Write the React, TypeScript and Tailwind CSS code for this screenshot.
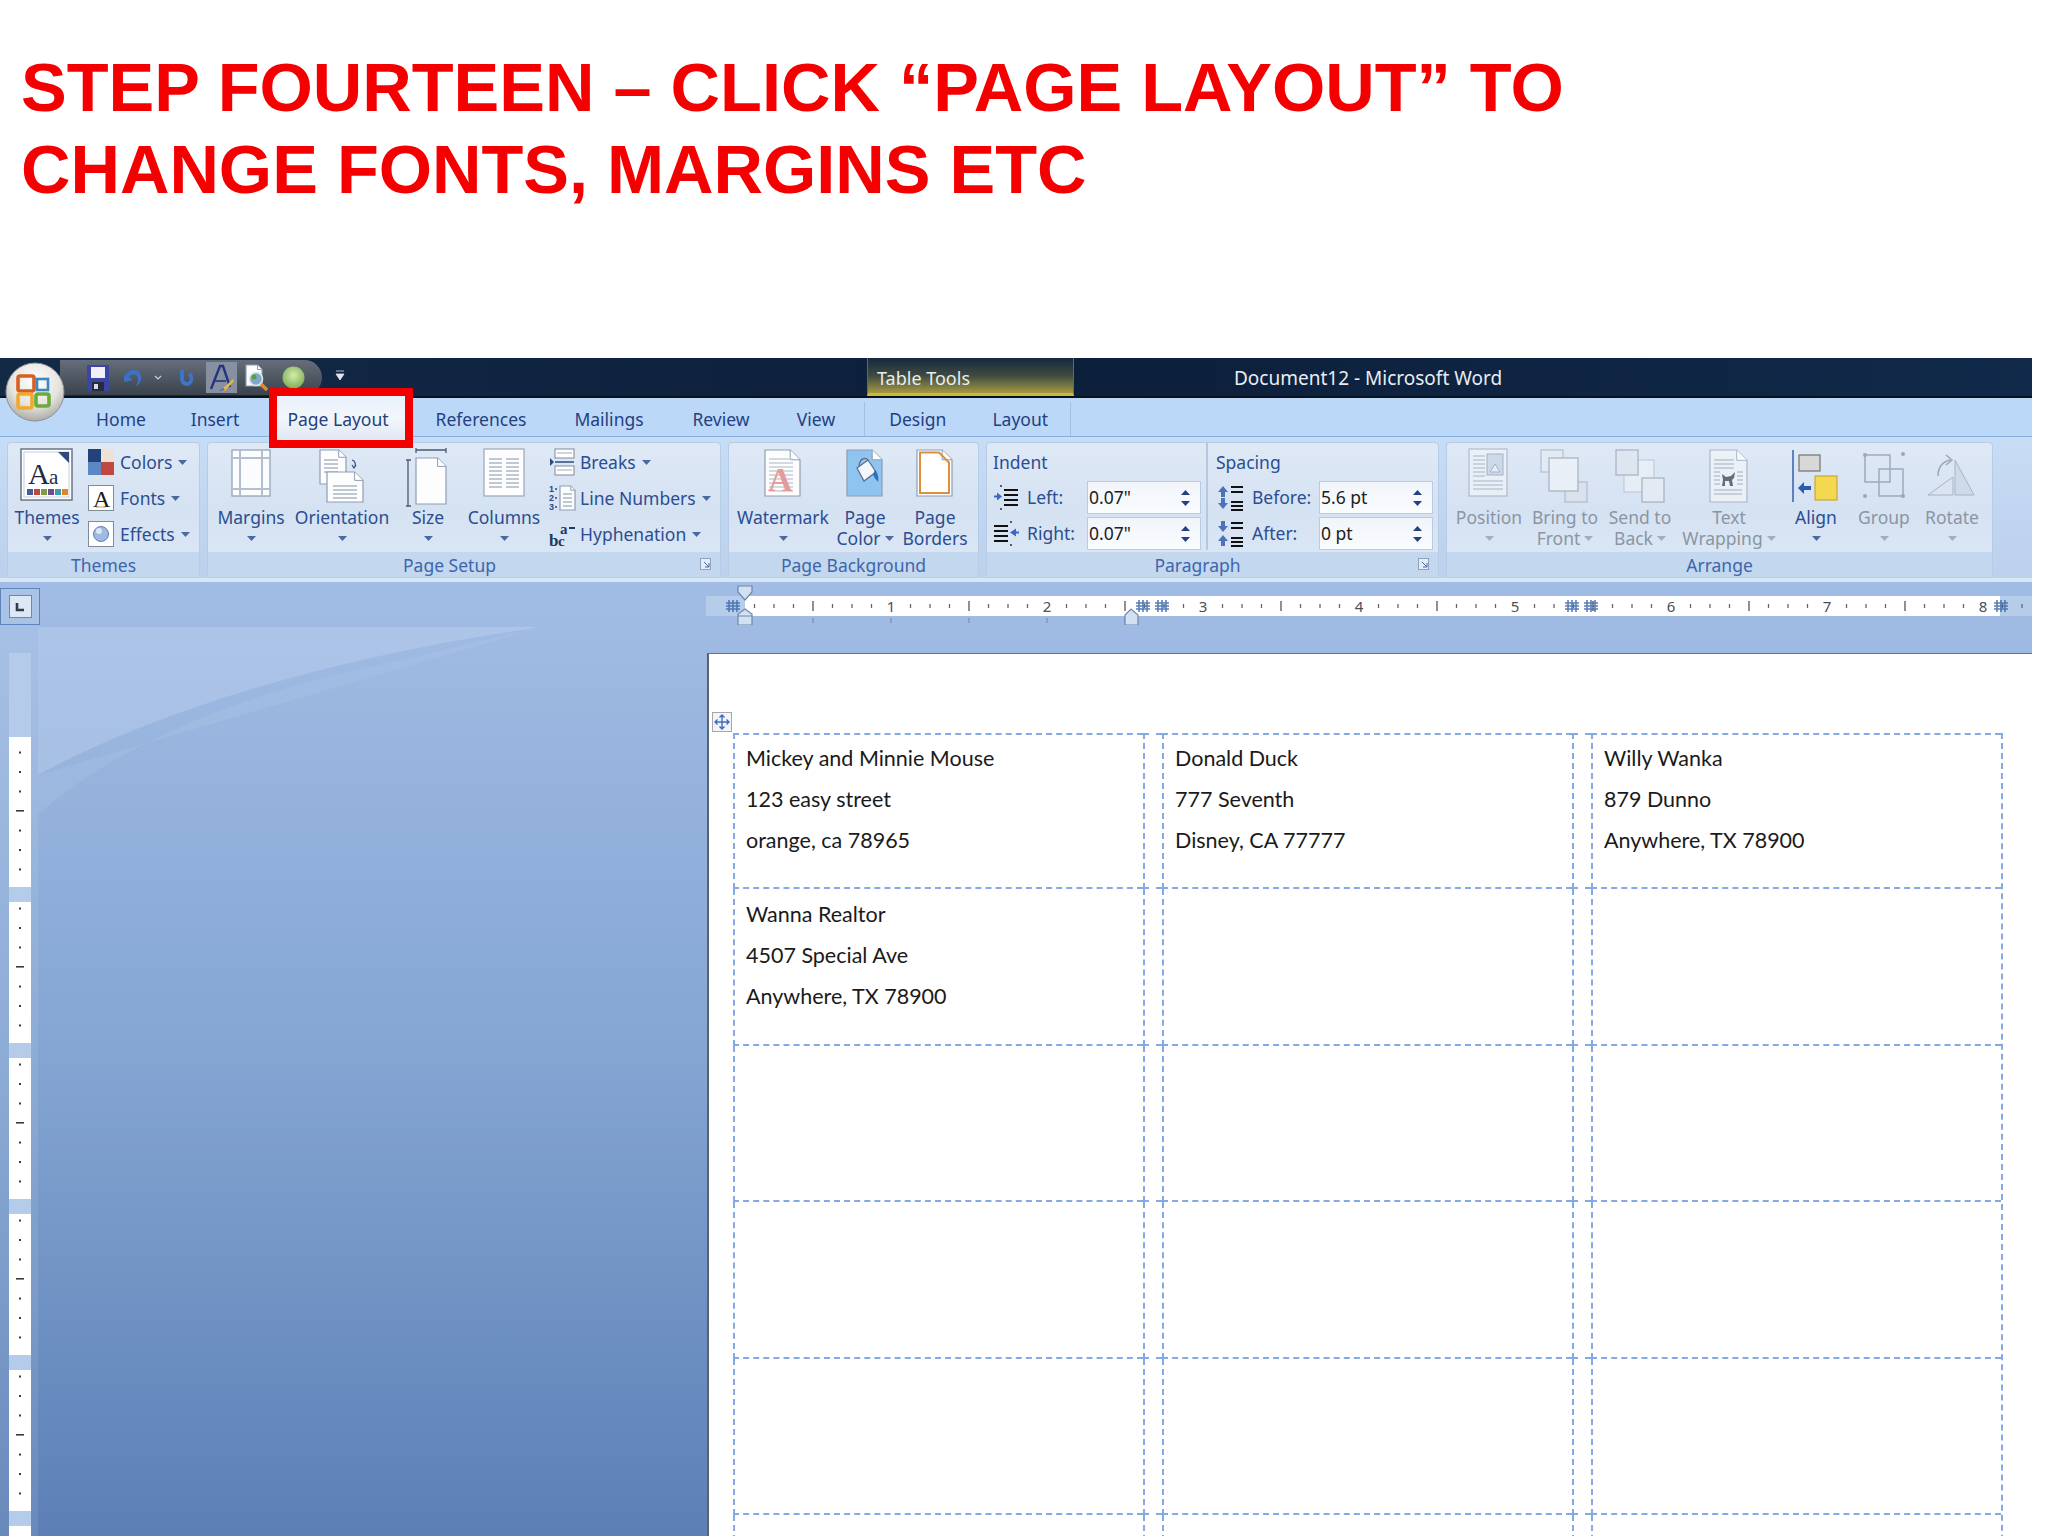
import React from "react";

const ui = { fontFamily: '"Noto Sans", sans-serif' };

// small dropdown triangle used all over the ribbon
function Caret({ color = "#4a69a3" }: { color?: string }) {
  return (
    <svg width="9" height="5" className="inline-block align-middle shrink-0">
      <path d="M0 0h9L4.5 5z" fill={color} />
    </svg>
  );
}

function Doc({ x, y, w, h, fill = "#fdfdfe", stroke = "#8d9db3" }: { x: number; y: number; w: number; h: number; fill?: string; stroke?: string }) {
  const f = Math.min(w, h) * 0.28;
  return (
    <g>
      <path d={`M${x} ${y}h${w - f}l${f} ${f}v${h - f}h${-w}z`} fill={fill} stroke={stroke} strokeWidth="1.2" />
      <path d={`M${x + w - f} ${y}v${f}h${f}`} fill="#fff" stroke={stroke} strokeWidth="1" />
    </g>
  );
}

function Lines({ x, y, w, n, gap = 4, color = "#aab4c4" }: { x: number; y: number; w: number; n: number; gap?: number; color?: string }) {
  return (
    <g stroke={color} strokeWidth="1.4">
      {Array.from({ length: n }).map((_, i) => (
        <path key={i} d={`M${x} ${y + i * gap}h${w}`} />
      ))}
    </g>
  );
}

function ThemesIcon() {
  return (
    <svg width="54" height="54">
      <rect x="1" y="1" width="51" height="51" fill="#fff" stroke="#6a7687" strokeWidth="1.5" />
      <rect x="4" y="4" width="45" height="45" fill="none" stroke="#c3cedd" />
      <path d="M38 4h11v11z" fill="#2c4a80" />
      <text x="8" y="36" fontSize="30" fontFamily="Liberation Serif" fill="#1c2c4a">A</text>
      <text x="29" y="36" fontSize="21" fontFamily="Liberation Serif" fill="#1c2c4a">a</text>
      {["#3c5f9c", "#c2453e", "#7f9b45", "#6b4e8e", "#3d9ab0", "#e0852f"].map((c, i) => (
        <rect key={c} x={7 + i * 7} y="41" width="6" height="6" fill={c} />
      ))}
    </svg>
  );
}

function ColorsIcon() {
  return (
    <svg width="26" height="26">
      <rect width="13" height="13" fill="#23427c" />
      <rect x="13" width="13" height="13" fill="#eee2d4" />
      <rect y="13" width="13" height="13" fill="#5b88c4" />
      <rect x="13" y="13" width="13" height="13" fill="#c2473f" />
    </svg>
  );
}

function FontsIcon() {
  return (
    <svg width="26" height="26">
      <rect x="0.5" y="0.5" width="25" height="25" fill="#fff" stroke="#7f8a9b" />
      <text x="5" y="22" fontSize="24" fontFamily="Liberation Serif" fill="#1a1a1a">A</text>
      <path d="M8 22h10" stroke="#d9a441" strokeWidth="1" />
    </svg>
  );
}

function EffectsIcon() {
  return (
    <svg width="26" height="26">
      <rect x="0.5" y="0.5" width="25" height="25" fill="#fff" stroke="#7f8a9b" />
      <circle cx="13" cy="13" r="7.5" fill="#9fbbe0" stroke="#5c7fb2" />
      <circle cx="11" cy="10" r="3" fill="#dbe7f6" />
    </svg>
  );
}

function MarginsIcon() {
  return (
    <svg width="42" height="50">
      <rect x="2" y="2" width="38" height="46" fill="#fbfcfe" stroke="#8d9db3" strokeWidth="1.2" />
      <path d="M10 2v46M32 2v46M2 10h38M2 41h38" stroke="#b4bfce" strokeWidth="2" />
    </svg>
  );
}

function OrientationIcon() {
  return (
    <svg width="48" height="56">
      <Doc x={2} y={2} w={26} h={34} />
      <Lines x={6} y={12} w={14} n={4} />
      <path d="M34 12c3 1 4 3 3 7M38 17l-2 3-2-3" fill="none" stroke="#2c4a80" strokeWidth="1.2" />
      <Doc x={9} y={24} w={36} h={30} />
      <Lines x={15} y={38} w={24} n={4} />
    </svg>
  );
}

function SizeIcon() {
  return (
    <svg width="44" height="60">
      <path d="M10 2h30M10 0v5M40 0v5M2 12v46M0 12h5M0 58h5" stroke="#4a5a73" strokeWidth="1.3" />
      <Doc x={10} y={10} w={30} h={46} />
    </svg>
  );
}

function ColumnsIcon() {
  return (
    <svg width="42" height="50">
      <rect x="1" y="1" width="40" height="47" fill="#fdfdfe" stroke="#9aa7b9" strokeWidth="1.2" />
      <Lines x={6} y={11} w={13} n={8} />
      <Lines x={23} y={11} w={13} n={8} />
    </svg>
  );
}

function WatermarkIcon() {
  return (
    <svg width="40" height="50">
      <Doc x={2} y={2} w={35} h={46} />
      <Lines x={6} y={11} w={24} n={9} color="#c6ced9" />
      <text x="5" y="43" fontSize="34" fontFamily="Liberation Serif" fontWeight="700" fill="#e59b9b">A</text>
    </svg>
  );
}

function PageColorIcon() {
  return (
    <svg width="40" height="50">
      <Doc x={2} y={2} w={35} h={46} fill="#8fc3f0" />
      <path d="M12 20l11-8 8 12-12 9z" fill="#f4f7fb" stroke="#5a6c86" strokeWidth="1.2" />
      <path d="M14 18c1-8 6-9 9-6" fill="none" stroke="#5a6c86" strokeWidth="1.2" />
      <path d="M30 22c3 3 4 8 3 12-2-3-4-4-5-8z" fill="#2b72c0" />
    </svg>
  );
}

function PageBordersIcon() {
  return (
    <svg width="40" height="50">
      <Doc x={2} y={2} w={35} h={46} fill="#fff" stroke="#8d9db3" />
      <path d="M5 4.5h19l10 10V45H5z" fill="none" stroke="#de8f3c" strokeWidth="2" />
    </svg>
  );
}

function PositionIcon() {
  return (
    <svg width="42" height="50" opacity="0.65">
      <rect x="1" y="1" width="38" height="47" fill="#f2f5f9" stroke="#9aa7b9" strokeWidth="1.2" />
      <Lines x={5} y={8} w={12} n={6} gap={4} />
      <Lines x={5} y={33} w={30} n={3} gap={4} />
      <rect x="19" y="6" width="16" height="21" fill="#c6d3e4" stroke="#8796ab" />
      <path d="M22 24l5-8 5 8z" fill="#eef2f7" stroke="#8796ab" />
    </svg>
  );
}

function BringFrontIcon() {
  return (
    <svg width="52" height="56" opacity="0.65">
      <rect x="26" y="34" width="22" height="20" fill="#dbe2ea" stroke="#8f9cae" />
      <rect x="2" y="2" width="22" height="22" fill="#e6ecf4" stroke="#8f9cae" />
      <rect x="10" y="10" width="29" height="33" fill="#f2f5f9" stroke="#8f9cae" strokeWidth="1.3" />
    </svg>
  );
}

function SendBackIcon() {
  return (
    <svg width="52" height="56" opacity="0.65">
      <rect x="10" y="12" width="30" height="32" fill="#eef2f7" stroke="#a9b4c4" />
      <rect x="2" y="2" width="22" height="25" fill="#dfe5ed" stroke="#8f9cae" strokeWidth="1.3" />
      <rect x="28" y="30" width="22" height="24" fill="#eaeef4" stroke="#8f9cae" strokeWidth="1.3" />
    </svg>
  );
}

function WrapIcon() {
  return (
    <svg width="42" height="56" opacity="0.75">
      <Doc x={2} y={2} w={37} h={52} fill="#f2f5f9" stroke="#9aa7b9" />
      <Lines x={6} y={12} w={20} n={3} />
      <Lines x={6} y={42} w={28} n={2} />
      <Lines x={6} y={24} w={6} n={4} />
      <Lines x={29} y={24} w={6} n={4} />
      <path d="M14 26l4 3 5-1 4-4-1 6-2 2 1 6-3 0-1-5-4 0 0 5-3 0 1-6z" fill="#3c4554" />
    </svg>
  );
}

function AlignIcon() {
  return (
    <svg width="48" height="56">
      <path d="M1 2v52" stroke="#3f66b3" strokeWidth="1.6" />
      <rect x="7" y="7" width="21" height="16" fill="#d8d8d8" stroke="#7a7a7a" strokeWidth="1.3" />
      <rect x="23" y="28" width="22" height="24" fill="#f4d84f" stroke="#c7a93a" strokeWidth="1.2" />
      <path d="M6 40l6-6v4h7v4h-7v4z" fill="#2a5bb0" />
    </svg>
  );
}

function GroupIcon() {
  return (
    <svg width="44" height="56" opacity="0.6">
      <rect x="3" y="7" width="25" height="27" fill="none" stroke="#6f7d91" strokeWidth="1.4" />
      <rect x="17" y="21" width="24" height="27" fill="none" stroke="#6f7d91" strokeWidth="1.4" />
      <circle cx="3" cy="7" r="2" fill="#6f7d91" />
      <circle cx="41" cy="6" r="2" fill="#6f7d91" />
      <circle cx="3" cy="48" r="2" fill="#6f7d91" />
      <circle cx="41" cy="48" r="2" fill="#6f7d91" />
    </svg>
  );
}

function RotateIcon() {
  return (
    <svg width="52" height="56" opacity="0.6">
      <path d="M2 47l25-18v18z" fill="#dde4ed" stroke="#8796ab" />
      <path d="M29 12l19 35H29z" fill="#c9d4e2" stroke="#8796ab" />
      <path d="M12 28c0-9 4-14 12-16M20 7l6 5-6 5" fill="none" stroke="#6f7d91" strokeWidth="1.4" />
    </svg>
  );
}

function BreaksIcon() {
  return (
    <svg width="26" height="28">
      <rect x="6" y="1" width="19" height="9" fill="#fff" stroke="#7e8a9c" />
      <rect x="6" y="18" width="19" height="9" fill="#fff" stroke="#7e8a9c" />
      <path d="M8 5h15M8 22h15" stroke="#a3adbb" />
      <path d="M6 14h19" stroke="#2c4a80" strokeWidth="1.4" />
      <path d="M1 10l4 4-4 4z" fill="#2c4a80" />
    </svg>
  );
}

function LineNumbersIcon() {
  return (
    <svg width="28" height="28">
      <text x="0" y="8" fontSize="9" fontWeight="700" fontFamily="Liberation Sans" fill="#2c4a80">1</text>
      <text x="0" y="17" fontSize="9" fontWeight="700" fontFamily="Liberation Sans" fill="#2c4a80">2</text>
      <text x="0" y="26" fontSize="9" fontWeight="700" fontFamily="Liberation Sans" fill="#2c4a80">3</text>
      <path d="M6 5h2M6 14h2M6 23h2" stroke="#2c4a80" strokeWidth="1.6" />
      <Doc x={11} y={2} w={15} h={24} />
      <Lines x={14} y={10} w={9} n={4} />
    </svg>
  );
}

function HyphenIcon() {
  return (
    <svg width="28" height="28">
      <text x="0" y="26" fontSize="17" fontWeight="700" fontFamily="Liberation Serif" fill="#233a60">b</text>
      <text x="9" y="26" fontSize="15" fontWeight="700" fontFamily="Liberation Serif" fill="#233a60">c</text>
      <text x="11" y="14" fontSize="15" fontWeight="700" fontFamily="Liberation Serif" fill="#233a60">a</text>
      <path d="M20 8h6" stroke="#233a60" strokeWidth="2" />
    </svg>
  );
}

function IndentIcon({ right }: { right?: boolean }) {
  return (
    <svg width="26" height="28">
      <g stroke="#111" strokeWidth="2.2">
        {right ? (
          <path d="M1 6h14M1 11h14M1 16h14M1 21h14" />
        ) : (
          <path d="M11 6h14M11 11h14M11 16h14M11 21h14" />
        )}
      </g>
      <path d={right ? "M17 12.5l6-4v3h3v2h-3v3z" : "M9 12.5l-5-4v3H1v2h3v3z"} fill="#3b66c4" />
      <path d={right ? "M18 1v2M18 24v2" : "M8 1v2M8 24v2"} stroke="#222" strokeWidth="1.4" />
    </svg>
  );
}

function SpacingIcon({ after }: { after?: boolean }) {
  const up = "M7 3l5 6H9v5H5V9H2z";
  const down = "M5 15h4v5h3l-5 6-5-6h3z";
  return (
    <svg width="28" height="30">
      <path d={after ? "M5 2h4v5h3l-5 6-5-6h3z" : up} fill="#4c73b8" />
      <path d={after ? "M7 16l5 6H9v5H5v-5H2z" : down} fill="#4c73b8" />
      <path d="M15 4h12M15 9h12M15 19h12M15 23h12M15 27h12" stroke="#111" strokeWidth="2" />
    </svg>
  );
}

function Launcher() {
  return (
    <svg width="12" height="13" className="absolute right-[8px] bottom-[6px]">
      <rect x="0.5" y="0.5" width="10" height="11" fill="#e4ecf6" stroke="#8ea2be" />
      <path d="M4 4l5 5M9 5v4H5" stroke="#4a69a3" fill="none" />
    </svg>
  );
}

function OfficeOrb() {
  return (
    <svg width="60" height="62" className="absolute left-[5px] top-[3px] z-20">
      <defs>
        <radialGradient id="orb" cx="50%" cy="32%" r="70%">
          <stop offset="0%" stopColor="#ffffff" />
          <stop offset="60%" stopColor="#e6e4df" />
          <stop offset="100%" stopColor="#a8a7a2" />
        </radialGradient>
      </defs>
      <circle cx="30" cy="31" r="29" fill="url(#orb)" stroke="#8d9199" />
      <rect x="13" y="15" width="16" height="15" rx="2" fill="none" stroke="#d85f22" strokeWidth="3.6" />
      <rect x="32" y="18" width="11" height="11" fill="none" stroke="#3a86c6" strokeWidth="2.6" />
      <rect x="13" y="33" width="14" height="14" rx="2" fill="none" stroke="#f0a92a" strokeWidth="3.6" />
      <rect x="31" y="33" width="13" height="12" rx="2" fill="none" stroke="#6cab39" strokeWidth="3.6" />
    </svg>
  );
}

function Quick() {
  return (
    <div className="flex items-center w-[262px] h-[35px] mt-[2px] rounded-r-[22px] pl-[27px] bg-gradient-to-b from-[#666e79] to-[#3a424e]">
      <svg width="22" height="26" className="mr-[14px]">
        <rect width="22" height="26" rx="1" fill="#3b45a8" />
        <rect x="4" y="2" width="14" height="11" fill="#eef0f6" />
        <rect x="5" y="17" width="12" height="9" fill="#2a2a3a" />
        <rect x="7" y="19" width="4" height="5" fill="#d9dbe4" />
      </svg>
      <svg width="20" height="22" className="mr-[11px]">
        <path d="M2 10c2-6 8-9 13-6 4 3 4 9 1 13l-4 3c3-4 4-8 2-11-3-3-6-2-8 1l4 3-9 2 0-9z" fill="#3c72c4" />
      </svg>
      <svg width="8" height="6" className="mr-[14px]">
        <path d="M1 1l3 3 3-3" fill="none" stroke="#c9d2dc" strokeWidth="1.2" />
      </svg>
      <svg width="20" height="22" className="mr-[10px]">
        <path d="M4 3v8c0 5 3 8 7 8s7-4 6-10l-2-4-3 3c2 2 2 4 1 6-2 2-5 1-5-3V3z" fill="#3c74c9" />
      </svg>
      <div className="flex items-center justify-center w-[31px] h-[31px] mr-[8px] bg-[#8790a0]">
        <svg width="24" height="28">
          <path d="M1 25L10 2h3l7 21" fill="none" stroke="#23357e" strokeWidth="2.4" />
          <path d="M5 17h11" stroke="#23357e" strokeWidth="1.6" />
          <path d="M11 26l12-11 1 2-9 10z" fill="#e6b64a" />
          <path d="M9 27l4-3 2 2z" fill="#3d6dc0" />
        </svg>
      </div>
      <svg width="24" height="28" className="mr-[13px]">
        <Doc x={1} y={1} w={16} h={21} />
        <circle cx="11" cy="15" r="6.5" fill="#7fa9c9" stroke="#dde4ea" strokeWidth="1.6" />
        <circle cx="9" cy="13" r="2.5" fill="#5c9a46" />
        <path d="M16 20l6 6" stroke="#e68a21" strokeWidth="3.4" />
      </svg>
      <svg width="23" height="23">
        <defs>
          <radialGradient id="gr" cx="50%" cy="40%" r="60%">
            <stop offset="0%" stopColor="#d4eda9" />
            <stop offset="100%" stopColor="#7fb05a" />
          </radialGradient>
        </defs>
        <circle cx="11.5" cy="11.5" r="11" fill="url(#gr)" />
      </svg>
    </div>
  );
}

const tabs = [
  { label: "Home", w: "w-[102px]" },
  { label: "Insert", w: "w-[86px]" },
  { label: "Page Layout", w: "w-[160px]", active: true },
  { label: "References", w: "w-[126px]" },
  { label: "Mailings", w: "w-[130px]" },
  { label: "Review", w: "w-[94px]" },
  { label: "View", w: "w-[96px]" },
];

function TitleBar() {
  return (
    <div className="flex h-[40px] border-b-2 border-b-[#0a121c] bg-gradient-to-r from-[#132a47] via-[#0c1f3a] to-[#11294a] text-[#e8edf3]">
      <div className="ml-[60px]">
        <Quick />
      </div>
      <svg width="12" height="12" className="ml-[12px] mt-[12px]">
        <path d="M2 1h8M2 4h8L6 10z" fill="#dfe6ef" stroke="#dfe6ef" strokeWidth="0.8" />
      </svg>
      <div className="ml-[521px] w-[207px] h-[38px] pl-[9px] pt-[9px] text-[18px] leading-[22px] whitespace-nowrap border-x border-x-[#5a6a7d] bg-gradient-to-b from-[#16293f] via-[#3f4a3f] to-[#a59a3d] border-b-[3px] border-b-[#cdb83c]">
        Table Tools
      </div>
      <div className="ml-[160px] pt-[9px] text-[19px] leading-[22px] whitespace-nowrap">Document12 - Microsoft Word</div>
    </div>
  );
}

function TabRow() {
  return (
    <div className="flex h-[39px] pl-[70px] pt-[4px] border-b border-b-[#83aedf] bg-[#bcd8f9] text-[17.5px] text-[#23407f]">
      {tabs.map((t) =>
        t.active ? (
          <div key={t.label} className={`relative ${t.w} flex items-center justify-center`}>
            <div className="absolute left-[11px] top-[-14px] w-[144px] h-[60px] z-10 border-[8px] border-[#f20000] bg-gradient-to-b from-[#e9f1fb] via-[#f3f6fb] to-[#dfe8f4]" />
            <span className="relative z-10">{t.label}</span>
          </div>
        ) : (
          <div key={t.label} className={`${t.w} flex items-center justify-center`}>{t.label}</div>
        ),
      )}
      <div className="flex h-[34px] w-[207px] border-x border-x-[#a3c0e3]">
        <div className="w-[106px] flex items-center justify-center text-[#1f3d86]">Design</div>
        <div className="w-[100px] flex items-center justify-center">Layout</div>
      </div>
    </div>
  );
}

function Group({ w, label, launcher, pr, children }: { w: string; label: string; launcher?: boolean; pr?: string; children: React.ReactNode }) {
  return (
    <div className={`${w} relative h-[136px] flex flex-col rounded-[4px] overflow-hidden border border-[#b5cbe6] bg-gradient-to-b from-[#dfe9f6] via-[#d5e2f2] to-[#dce8f6]`}>
      <div className="flex flex-1">{children}</div>
      <div className={`h-[25px] pt-[2px] flex items-center justify-center bg-[#c3d7ef] text-[17.5px] text-[#3e66ac] ${pr ?? ""}`}>{label}</div>
      {launcher && <Launcher />}
    </div>
  );
}

function BigBtn({ w, icon, lines, caret = true, off }: { w: string; icon: React.ReactNode; lines: string[]; caret?: boolean; off?: boolean }) {
  const color = off ? "text-[#8b95a3]" : "text-[#2b4d91]";
  const caretColor = off ? "#a3adbb" : "#4a69a3";
  return (
    <div className={`${w} flex flex-col items-center pt-[5px] text-[17.5px] leading-[21px] whitespace-nowrap ${color}`}>
      <div className="h-[59px] flex items-start justify-center">{icon}</div>
      <div>{lines[0]}</div>
      {lines[1] ? (
        <div className="flex items-center gap-[4px]">
          {lines[1]}
          {caret && <Caret color={caretColor} />}
        </div>
      ) : (
        <div className="h-[21px] flex items-center">{caret && <Caret color={caretColor} />}</div>
      )}
    </div>
  );
}

function SmallRow({ icon, label, w }: { icon: React.ReactNode; label: string; w: string }) {
  return (
    <div className="flex items-center h-[36px] text-[17.5px] text-[#2b4d91] whitespace-nowrap">
      <div className={`${w} flex items-center`}>{icon}</div>
      <span className="mr-[6px]">{label}</span>
      <Caret />
    </div>
  );
}

function Spin({ value, w }: { value: string; w: string }) {
  return (
    <div className={`${w} h-[33px] flex items-center justify-between pl-[1px] pr-[10px] border border-[#b7cbe4] bg-gradient-to-b from-[#f1f5fb] to-[#fafcfe] text-[17.5px] text-[#202020]`}>
      <span>{value}</span>
      <div className="flex flex-col gap-[6px]">
        <svg width="9" height="5"><path d="M0 5h9L4.5 0z" fill="#23407f" /></svg>
        <svg width="9" height="5"><path d="M0 0h9L4.5 5z" fill="#23407f" /></svg>
      </div>
    </div>
  );
}

function ParaRow({ icon, label, value, labelW, last }: { icon: React.ReactNode; label: string; value: string; labelW: string; last?: boolean }) {
  return (
    <div className={`flex items-center h-[33px] ${last ? "" : "mb-[3px]"} text-[17.5px] text-[#2b4d91]`}>
      <div className={labelW}>
        <div className="flex items-center gap-[8px]">
          {icon}
          <span>{label}</span>
        </div>
      </div>
      <Spin value={value} w="w-[114px]" />
    </div>
  );
}

function Ribbon() {
  return (
    <div className="flex gap-[7px] h-[145px] pl-[7px] pt-[5px] border-b-[4px] border-b-[#d6e6f7] bg-gradient-to-b from-[#c7dcf5] to-[#bbd1ec]" style={ui}>
      <Group w="w-[193px]" label="Themes">
        <BigBtn w="w-[78px]" icon={<ThemesIcon />} lines={["Themes"]} />
        <div className="pl-[2px] pt-[1px]">
          <SmallRow w="w-[32px]" icon={<ColorsIcon />} label="Colors" />
          <SmallRow w="w-[32px]" icon={<FontsIcon />} label="Fonts" />
          <SmallRow w="w-[32px]" icon={<EffectsIcon />} label="Effects" />
        </div>
      </Group>
      <Group w="w-[514px]" label="Page Setup" launcher pr="pr-[29px]">
        <BigBtn w="w-[86px]" icon={<MarginsIcon />} lines={["Margins"]} />
        <BigBtn w="w-[96px]" icon={<OrientationIcon />} lines={["Orientation"]} />
        <BigBtn w="w-[76px]" icon={<SizeIcon />} lines={["Size"]} />
        <BigBtn w="w-[76px]" icon={<ColumnsIcon />} lines={["Columns"]} />
        <div className="pl-[7px] pt-[1px]">
          <SmallRow w="w-[31px]" icon={<BreaksIcon />} label="Breaks" />
          <SmallRow w="w-[31px]" icon={<LineNumbersIcon />} label="Line Numbers" />
          <SmallRow w="w-[31px]" icon={<HyphenIcon />} label="Hyphenation" />
        </div>
      </Group>
      <Group w="w-[251px]" label="Page Background">
        <BigBtn w="w-[108px]" icon={<WatermarkIcon />} lines={["Watermark"]} />
        <BigBtn w="w-[56px]" icon={<PageColorIcon />} lines={["Page", "Color"]} />
        <BigBtn w="w-[84px]" icon={<PageBordersIcon />} lines={["Page", "Borders"]} caret={false} />
      </Group>
      <Group w="w-[453px]" label="Paragraph" launcher pr="pr-[30px]">
        <div className="w-[221px] pl-[6px] pt-[8px] border-r-2 border-r-[#b6c8de] mb-[2px] text-[17.5px] text-[#2b4d91]">
          <div className="h-[22px] leading-[22px] mb-[8px]">Indent</div>
          <ParaRow labelW="w-[94px]" icon={<IndentIcon />} label="Left:" value={'0.07"'} />
          <ParaRow labelW="w-[94px]" icon={<IndentIcon right />} label="Right:" value={'0.07"'} last />
        </div>
        <div className="pl-[8px] pt-[8px] text-[17.5px] text-[#2b4d91]">
          <div className="h-[22px] leading-[22px] mb-[8px]">Spacing</div>
          <ParaRow labelW="w-[103px]" icon={<SpacingIcon />} label="Before:" value="5.6 pt" />
          <ParaRow labelW="w-[103px]" icon={<SpacingIcon after />} label="After:" value="0 pt" last />
        </div>
      </Group>
      <Group w="w-[547px]" label="Arrange">
        <BigBtn w="w-[84px]" off icon={<PositionIcon />} lines={["Position"]} />
        <BigBtn w="w-[68px]" off icon={<BringFrontIcon />} lines={["Bring to", "Front"]} />
        <BigBtn w="w-[82px]" off icon={<SendBackIcon />} lines={["Send to", "Back"]} />
        <BigBtn w="w-[96px]" off icon={<WrapIcon />} lines={["Text", "Wrapping"]} />
        <BigBtn w="w-[78px]" icon={<AlignIcon />} lines={["Align"]} />
        <BigBtn w="w-[58px]" off icon={<GroupIcon />} lines={["Group"]} />
        <BigBtn w="w-[78px]" off icon={<RotateIcon />} lines={["Rotate"]} />
      </Group>
    </div>
  );
}

function ColMark({ x }: { x: number }) {
  return (
    <path
      d={`M${x - 4} 18v12M${x} 18v12M${x + 4} 18v12M${x - 7} 21h14M${x - 7} 24h14M${x - 7} 27h14`}
      stroke="#3f68ad"
      strokeWidth="1.6"
      opacity="0.85"
    />
  );
}

function HRuler() {
  const zero = 29; // 0 inch mark inside the svg
  const inch = 156;
  const marks: React.ReactNode[] = [];
  for (let i = 1; i < 67; i++) {
    const x = zero + (i * inch) / 8;
    if (x > 1320) break;
    if (i % 8 === 0) {
      marks.push(
        <text key={i} x={x} y="30" textAnchor="middle" fontSize="15" fontFamily="Noto Sans" fill="#4a4f58">
          {i / 8}
        </text>,
      );
    } else if (i % 4 === 0) {
      marks.push(<path key={i} d={`M${x} 19v10`} stroke="#555" strokeWidth="1.3" />);
    } else {
      marks.push(<path key={i} d={`M${x} 22v4`} stroke="#666" strokeWidth="1.3" />);
    }
  }
  return (
    <svg width="1326" height="43" className="ml-[666px] shrink-0">
      <rect x="0" y="14" width="1326" height="20" fill="#b6cdea" />
      <rect x="39" y="14" width="1255" height="20" fill="#fff" />
      {marks}
      {[107, 185, 263, 341, 419].map((x) => (
        <path key={x} d={`M${x} 36v5`} stroke="#7d8da3" strokeWidth="1.2" />
      ))}
      {[27, 437, 456, 866, 885, 1295].map((x) => (
        <ColMark key={x} x={x} />
      ))}
      <path d="M32 4h14v6l-7 8-7-8zM39 27l7 5v11H32V32z" fill="#d3e0f1" stroke="#6d87ac" strokeWidth="1.2" />
      <path d="M32 34h14" stroke="#6d87ac" />
      <path d="M419 43V33l6-6 7 6v10z" fill="#d3e0f1" stroke="#6d87ac" strokeWidth="1.2" />
    </svg>
  );
}

function RulerRow() {
  return (
    <div className="flex h-[43px]">
      <div className="w-[40px] h-[37px] mt-[6px] flex items-center justify-center border border-[#5f84bd] bg-[#a9c3e6]">
        <div className="w-[23px] h-[23px] flex items-center justify-center border border-[#6b88b3] bg-[#dce8f6]">
          <svg width="10" height="10">
            <path d="M2 1v7h7" fill="none" stroke="#2e3a4d" strokeWidth="2.6" />
          </svg>
        </div>
      </div>
      <HRuler />
    </div>
  );
}

function VRuler() {
  const rows = [0, 1, 2, 3, 4];
  return (
    <svg width="22" height="883" className="shrink-0 ml-[9px]">
      <rect width="22" height="883" fill="#fff" />
      <rect width="22" height="84" fill="#b5cbea" />
      {rows.map((r) => (
        <g key={r}>
          <rect y={234 + r * 156} width="22" height="15" fill="#b5cbea" />
          {[-58.5, -39, -19.5, 19.5, 39, 58.5].map((d) => (
            <rect key={d} x="10" y={157 + r * 156 + d} width="2" height="2" fill="#3c3c3c" />
          ))}
          <rect x="7" y={157 + r * 156} width="8" height="1.6" fill="#3c3c3c" />
        </g>
      ))}
    </svg>
  );
}

const labels: (string[] | null)[] = [
  ["Mickey and Minnie Mouse", "123 easy street", "orange, ca 78965"],
  ["Donald Duck", "777 Seventh", "Disney, CA 77777"],
  ["Willy Wanka", "879 Dunno", "Anywhere, TX 78900"],
  ["Wanna Realtor", "4507 Special Ave", "Anywhere, TX 78900"],
];

function LabelCell({ lines, top }: { lines?: string[] | null; top?: boolean }) {
  return (
    <div className={`h-[156.4px] pl-[11px] border-l-2 border-b-2 border-dashed border-[#84a9e4] ${top ? "border-t-2 pt-[3px]" : "pt-[5px]"}`}>
      {lines?.map((l) => (
        <div key={l} className="h-[41px] leading-[41px] text-[21.5px] text-[#1a1a1a] whitespace-nowrap">
          {l}
        </div>
      ))}
    </div>
  );
}

function Gutter({ top }: { top?: boolean }) {
  return <div className={`h-[156.4px] border-l-2 border-b-2 border-dashed border-[#84a9e4] ${top ? "border-t-2" : ""}`} />;
}

function LabelTable() {
  const cells: React.ReactNode[] = [];
  for (let r = 0; r < 6; r++) {
    for (let c = 0; c < 3; c++) {
      const idx = r * 3 + c;
      cells.push(<LabelCell key={`c${idx}`} lines={labels[idx]} top={r === 0} />);
      if (c < 2) {
        cells.push(<Gutter key={`g${idx}`} top={r === 0} />);
      }
    }
  }
  return (
    <div className="grid grid-cols-[410px_19px_410px_19px_410px] w-[1270px] border-r-2 border-dashed border-[#84a9e4]" style={{ fontFamily: "Lato, sans-serif" }}>
      {cells}
    </div>
  );
}

function DocArea() {
  return (
    <div className="relative flex h-[911px] overflow-hidden">
      <svg width="504" height="200" className="absolute left-[38px] top-0">
        <path d="M0 150C120 85 300 30 504 2H0z" fill="#cfdff5" opacity="0.28" />
        <path d="M0 190C70 125 200 70 320 45L504 2 0 150z" fill="#bcd2f0" opacity="0.18" />
      </svg>
      <div className="flex w-[38px] pt-[28px] bg-[#ffffff14] shrink-0">
        <VRuler />
      </div>
      <div className="w-[669px] shrink-0" />
      <div className="relative flex-1 mt-[28px] pl-[24px] pt-[79px] bg-white border-l-2 border-l-[#5a6270] border-t border-t-[#6b7280]">
        <div className="absolute left-[3px] top-[58px] w-[20px] h-[20px] flex items-center justify-center border border-[#a7a7a7] bg-[#f2f4f8]">
          <svg width="16" height="16">
            <path d="M8 1v14M1 8h14M5.5 3.5L8 1l2.5 2.5M5.5 12.5L8 15l2.5-2.5M3.5 5.5L1 8l2.5 2.5M12.5 5.5L15 8l-2.5 2.5" fill="none" stroke="#3f6cc0" strokeWidth="1.4" />
          </svg>
        </div>
        <LabelTable />
      </div>
    </div>
  );
}

export default function App() {
  return (
    <div className="w-[2048px] h-[1536px] overflow-hidden bg-white">
      <div className="h-[358px] pl-[21px] pt-[47px] text-[68.5px] leading-[82px] font-bold text-[#f40000] whitespace-nowrap" style={{ fontFamily: '"Liberation Sans", sans-serif' }}>
        <div>STEP FOURTEEN – CLICK “PAGE LAYOUT” TO</div>
        <div>CHANGE FONTS, MARGINS ETC</div>
      </div>
      <div className="relative w-[2032px] h-[1178px]" style={ui}>
        <TitleBar />
        <TabRow />
        <Ribbon />
        <div className="bg-gradient-to-b from-[#a2bde5] via-[#84a5d2] to-[#5c80b6]">
          <RulerRow />
          <DocArea />
        </div>
        <OfficeOrb />
      </div>
    </div>
  );
}
